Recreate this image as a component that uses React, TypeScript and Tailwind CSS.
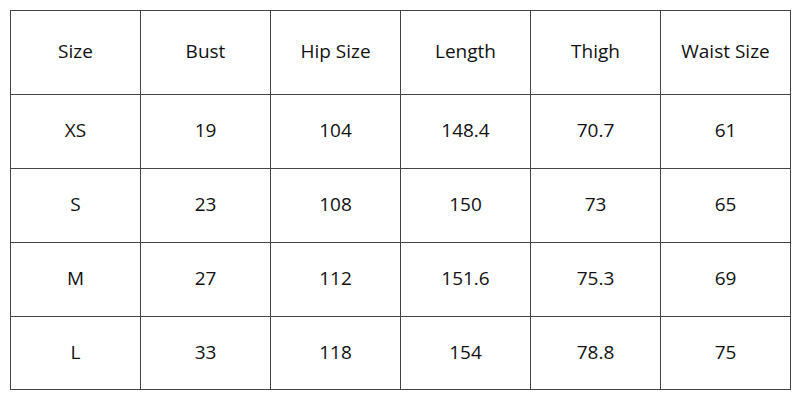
export default function App() {
  const header = ["Size", "Bust", "Hip Size", "Length", "Thigh", "Waist Size"];
  const rows = [
    ["XS", "19", "104", "148.4", "70.7", "61"],
    ["S", "23", "108", "150", "73", "65"],
    ["M", "27", "112", "151.6", "75.3", "69"],
    ["L", "33", "118", "154", "78.8", "75"],
  ];
  const heights = ["h-[74px]", "h-[74px]", "h-[74px]", "h-[73px]"];
  return (
    <div className="w-[800px] h-[400px] bg-white pt-[10px] pl-[10px]" style={{ fontFamily: '"Open Sans", sans-serif' }}>
      <table className="border-collapse table-fixed w-[781px] text-[19px] leading-[24px] text-[#111]">
        <tbody>
          <tr className="h-[84px]">
            {header.map((h) => (
              <td key={h} className="border border-[#444] text-center align-middle p-0 pb-[3px]">{h}</td>
            ))}
          </tr>
          {rows.map((r, i) => (
            <tr key={i} className={heights[i]}>
              {r.map((c, j) => (
                <td key={j} className="border border-[#444] text-center align-middle p-0 pb-[3px]">{c}</td>
              ))}
            </tr>
          ))}
        </tbody>
      </table>
    </div>
  );
}
